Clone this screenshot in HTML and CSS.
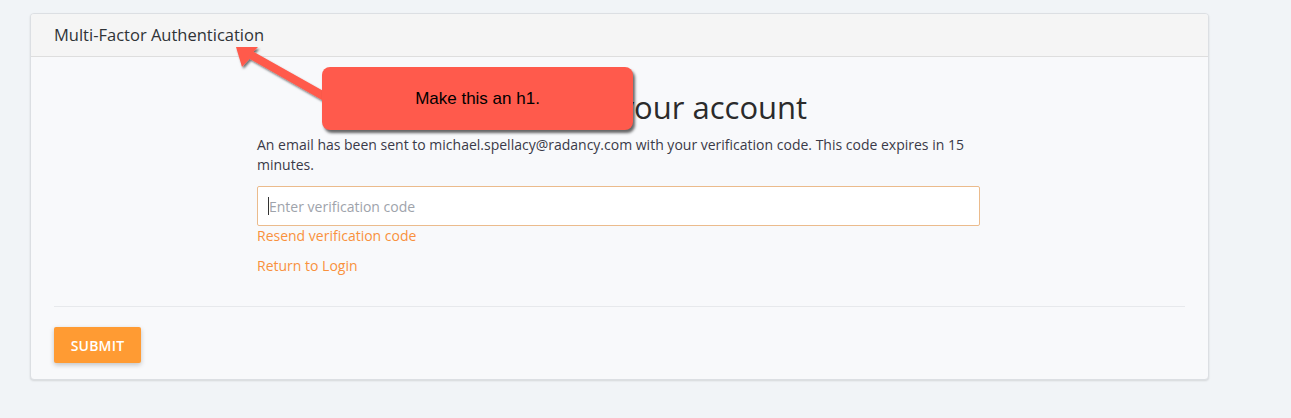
FILE: index.html
```html
<!DOCTYPE html>
<html lang="en">
<head>
<meta charset="utf-8">
<title>Multi-Factor Authentication</title>
<link rel="stylesheet" href="styles.css">
</head>
<body>
<div class="page">
  <section class="card">
    <header class="card-header">
      <h2 class="card-title">Multi-Factor Authentication</h2>
    </header>
    <div class="card-body">
      <div class="col">
        <h1 class="heading">Please verify your account</h1>
        <p class="lead">An email has been sent to michael.spellacy@radancy.com with your verification code. This code expires in 15 minutes.</p>
        <div class="field">
          <input class="input" type="text" placeholder="Enter verification code">
          <span class="caret"></span>
        </div>
        <a class="link link-resend" href="#">Resend verification code</a>
        <a class="link link-return" href="#">Return to Login</a>
      </div>
    </div>
    <footer class="card-footer">
      <button class="btn" type="button">SUBMIT</button>
    </footer>
  </section>
</div>

<div class="annotation">
  <svg class="arrow" width="1291" height="418" viewBox="0 0 1291 418" xmlns="http://www.w3.org/2000/svg">
    <defs>
      <filter id="sh" x="-20%" y="-20%" width="140%" height="140%">
        <feDropShadow dx="1.5" dy="2" stdDeviation="1.2" flood-color="#000" flood-opacity="0.55"/>
      </filter>
    </defs>
    <polygon filter="url(#sh)" fill="#ff5a4c"
      points="236,47 258,47 253.5,51.8 330.5,95 326.5,102.5 249.6,58.8 242,67"/>
  </svg>
  <div class="callout">Make this an h1.</div>
</div>
</body>
</html>
```

FILE: styles.css
```css
* { box-sizing: border-box; }

html, body {
  margin: 0;
  padding: 0;
}

body {
  background: #f1f4f7;
  font-family: "Open Sans", "Noto Sans", Arial, sans-serif;
  color: #333333;
  width: 1291px;
  height: 418px;
  overflow: hidden;
  position: relative;
}

.page {
  padding: 13px 0 0 30px;
}

.card {
  width: 1179px;
  background: #f8f9fb;
  border: 1px solid #dcdfe3;
  border-radius: 4px;
  box-shadow: 0 1px 2px rgba(0, 0, 0, 0.12);
  overflow: hidden;
}

.card-header {
  height: 43px;
  background: #f5f5f5;
  border-bottom: 1px solid #dedede;
  padding: 0 23px;
  display: flex;
  align-items: center;
}

.card-title {
  margin: 0;
  font-size: 16.5px;
  font-weight: 400;
  line-height: 42px;
  color: #2f3337;
}

.card-body {
  padding: 32px 25px 30px 23px;
  display: flex;
  justify-content: center;
}

.col {
  width: 723px;
  display: flex;
  flex-direction: column;
  align-items: flex-start;
}

.heading {
  align-self: stretch;
  text-align: center;
  margin: 0 0 10px;
  font-size: 31px;
  font-weight: 400;
  line-height: 36px;
  color: #2b2b2b;
}

.lead {
  margin: 0 0 11px;
  font-size: 14px;
  line-height: 20px;
  color: #3a3a48;
}

.field {
  position: relative;
  width: 723px;
}

.input {
  display: block;
  width: 100%;
  height: 40px;
  padding: 0 11px;
  background: #ffffff;
  border: 1px solid #ebbb8c;
  border-radius: 2px;
  font-family: "Open Sans", "Noto Sans", Arial, sans-serif;
  font-size: 14px;
  color: #333;
  outline: none;
}

.input::placeholder {
  color: #9ea3ab;
}

.caret {
  position: absolute;
  left: 11px;
  top: 11px;
  width: 1px;
  height: 18px;
  background: #333;
}

.link {
  font-size: 14px;
  line-height: 20px;
  color: #f9913d;
  text-decoration: none;
}

.link-return {
  margin-top: 10px;
}

.card-footer {
  margin: 0 23px;
  border-top: 1px solid #e7e9ec;
  padding: 20px 0 16px;
}

.btn {
  display: block;
  width: 87px;
  height: 36px;
  background: #ff9b33;
  color: #ffffff;
  border: none;
  border-radius: 2px;
  font-family: "Open Sans", "Noto Sans", Arial, sans-serif;
  font-size: 14px;
  font-weight: 600;
  letter-spacing: 0.2px;
  box-shadow: 0 2px 5px rgba(0, 0, 0, 0.22);
  padding: 0;
}

.annotation {
  position: absolute;
  left: 0;
  top: 0;
  width: 1291px;
  height: 418px;
  pointer-events: none;
}

.arrow {
  position: absolute;
  left: 0;
  top: 0;
}

.callout {
  position: absolute;
  left: 322px;
  top: 67px;
  width: 311px;
  height: 63px;
  background: #ff5a4c;
  border-radius: 8px;
  box-shadow: 2px 3px 3px rgba(0, 0, 0, 0.6);
  font-family: "Liberation Sans", Arial, sans-serif;
  font-size: 17px;
  color: #000;
  display: flex;
  align-items: center;
  justify-content: center;
}
```
